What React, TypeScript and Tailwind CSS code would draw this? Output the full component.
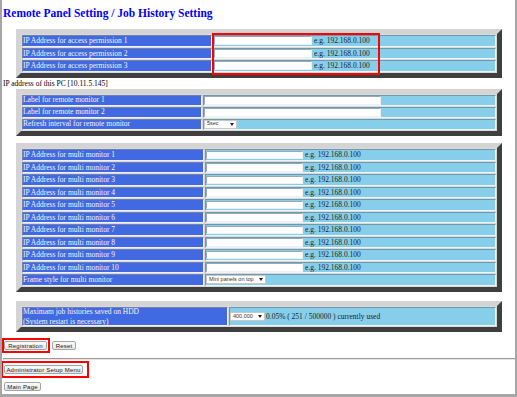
import React from 'react'

type Row = { label: React.ReactNode; value: React.ReactNode }

function Frame({ cols, rowH, rows, className = '' }: { cols: string; rowH: string; rows: Row[]; className?: string }) {
    return (
        <div className={`ml-[13px] w-[486px] border-[5px] border-t-[#d4d4d4] border-l-[#d4d4d4] border-b-[#3f3f3f] border-r-[#3f3f3f] ${className}`}>
            <div className={`grid ${cols} gap-px p-px bg-[#dadada]`}>
                {rows.map((r, i) => (
                    <React.Fragment key={i}>
                        <div className={`${rowH} flex items-center bg-[#4169e1] border border-t-[#6f7fb0] border-l-[#6f7fb0] border-b-[#eef0f8] border-r-[#eef0f8] text-[#f4f4f4] text-[7.5px] leading-[9.5px] whitespace-nowrap`}>
                            {r.label}
                        </div>
                        <div className={`${rowH} flex items-center bg-[#87ceeb] border border-t-[#6e98ab] border-l-[#6e98ab] border-b-[#eaf6fb] border-r-[#eaf6fb] text-[#1c1c1c] text-[7.5px] whitespace-nowrap`}>
                            {r.value}
                        </div>
                    </React.Fragment>
                ))}
            </div>
        </div>
    )
}

function Field({ w, h }: { w: string; h: string }) {
    return <input readOnly className={`${w} ${h} bg-white border border-t-[#9aaab4] border-l-[#9aaab4] border-b-[#f0f0f0] border-r-[#f0f0f0] outline-none`} />
}

function Select({ text, w }: { text: string; w: string }) {
    return (
        <div className={`${w} h-[9px] flex items-center justify-between bg-white border border-[#c8c8c8] px-[2px] text-[5.5px] leading-none text-[#333] font-['Liberation_Sans',Arial,sans-serif]`}>
            <span>{text}</span>
            <svg width="4" height="3" viewBox="0 0 4 3">
                <path d="M0 0H4L2 3Z" fill="#222" />
            </svg>
        </div>
    )
}

function Btn({ text, w }: { text: string; w: string }) {
    return (
        <button className={`${w} h-[9px] bg-gradient-to-b from-[#fafafa] to-[#e6e6e6] border border-[#a4a4a4] rounded-[2px] text-[6px] leading-none text-[#222] tracking-[0.2px] font-['Liberation_Sans',Arial,sans-serif]`}>
            {text}
        </button>
    )
}

const eg = 'e.g. 192.168.0.100'

export default function App() {
    const access = [1, 2, 3].map((n) => ({
        label: `IP Address for access permission ${n}`,
        value: (
            <>
                <Field w="w-[98px]" h="h-[9px]" />
                <span className="ml-[2px]">{eg}</span>
            </>
        ),
    }))

    const remote = [
        { label: 'Label for remote monitor 1', value: <Field w="w-[177px]" h="h-[9px]" /> },
        { label: 'Label for remote monitor 2', value: <Field w="w-[177px]" h="h-[9px]" /> },
        { label: 'Refresh interval for remote monitor', value: <Select text="5sec" w="w-[33px]" /> },
    ]

    const multi: Row[] = [1, 2, 3, 4, 5, 6, 7, 8, 9, 10].map((n) => ({
        label: `IP Address for multi monitor ${n}`,
        value: (
            <>
                <Field w="w-[97px]" h="h-[8.5px]" />
                <span className="ml-[2px]">{eg}</span>
            </>
        ),
    }))
    multi.push({ label: 'Frame style for multi monitor', value: <Select text="Mini panels on top" w="w-[60px]" /> })

    const hdd = [
        {
            label: (
                <div>
                    Maximam job histories saved on HDD
                    <br />
                    (System restart is necessary)
                </div>
            ),
            value: (
                <>
                    <Select text="400,000" w="w-[35px]" />
                    <span className="ml-px">0.05% ( 251 / 500000 ) currently used</span>
                </>
            ),
        },
    ]

    return (
        <div className="relative w-[517px] h-[397px] overflow-hidden bg-white border-l-2 border-r-2 border-b-[3px] border-[#a6a6a6] pl-px pt-[6px] font-['Liberation_Serif','Times_New_Roman',serif] text-black">
            <h1 className="h-[14px] text-[11.5px] leading-[14px] font-bold text-[#0000ff]">
                Remote Panel Setting / Job History Setting
            </h1>

            <Frame className="mt-[9px]" cols="grid-cols-[190px_1fr]" rowH="h-[11.5px]" rows={access} />

            <div className="h-[11px] text-[7.5px] leading-[11px]">IP address of this PC [10.11.5.145]</div>

            <Frame cols="grid-cols-[180px_1fr]" rowH="h-[11px]" rows={remote} />

            <Frame className="mt-[7.5px]" cols="grid-cols-[182px_1fr]" rowH="h-[11.5px]" rows={multi} />

            <Frame className="mt-[9.5px]" cols="grid-cols-[206px_1fr]" rowH="h-[19px]" rows={hdd} />

            <div className="mt-[9px] ml-px flex gap-[5px]">
                <Btn text="Registration" w="w-[43px]" />
                <Btn text="Reset" w="w-[24px]" />
            </div>

            <div className="mt-[7.5px] h-[2px] border-t border-t-[#9c9c9c] border-b border-b-[#e4e4e4]" />

            <div className="mt-[5.5px] ml-px flex">
                <Btn text="Administrator Setup Menu" w="w-[79px]" />
            </div>
            <div className="mt-[8px] ml-px flex">
                <Btn text="Main Page" w="w-[37px]" />
            </div>

            {/* red call-outs */}
            <div className="absolute left-[210px] top-[33px] w-[168px] h-[42px] border-2 border-[#ff0000]" />
            <div className="absolute left-0 top-[338px] w-[48px] h-[15px] border-2 border-[#ff0000]" />
            <div className="absolute left-[-1px] top-[361px] w-[88px] h-[17px] border-2 border-[#ff0000]" />
        </div>
    )
}
